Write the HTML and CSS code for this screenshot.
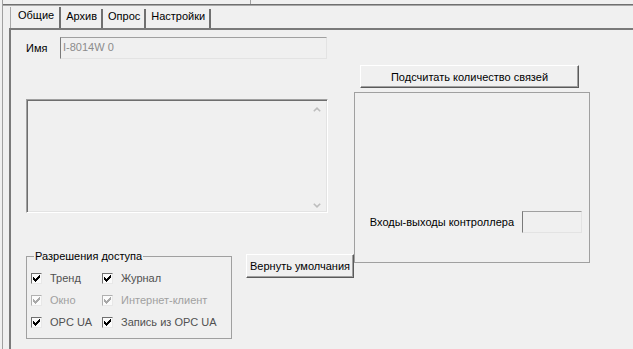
FILE: index.html
```
<!DOCTYPE html>
<html lang="ru">
<head>
<meta charset="utf-8">
<title>Общие</title>
<link rel="stylesheet" href="styles.css">
</head>
<body>
<div class="window">
  <div class="topstrip"><div class="topseg"></div></div>
  <div class="frame">
    <div class="tabs">
      <div class="tab active">Общие</div>
      <div class="tab">Архив</div>
      <div class="tab">Опрос</div>
      <div class="tab">Настройки</div>
    </div>
    <div class="page">
      <div class="col-left">
        <div class="name-row">
          <span class="label">Имя</span>
          <div class="field name-field">I-8014W 0</div>
        </div>
        <div class="listbox">
          <div class="list-body"></div>
          <div class="scroll">
            <div class="arrow"><svg width="8" height="5" viewBox="0 0 8 5"><polyline points="0.8,4.3 4,1.2 7.2,4.3" fill="none" stroke="#bdbdbd" stroke-width="1.6"/></svg></div>
            <div class="arrow arrow-down"><svg width="8" height="5" viewBox="0 0 8 5"><polyline points="0.8,0.7 4,3.8 7.2,0.7" fill="none" stroke="#bdbdbd" stroke-width="1.6"/></svg></div>
          </div>
        </div>
        <div class="bottom-row">
          <fieldset class="group">
            <legend>Разрешения доступа</legend>
            <div class="checks">
              <label class="check"><span class="cb"><svg width="7" height="7" viewBox="0 0 7 7" shape-rendering="crispEdges"><path d="M6 0h1v1h-1zM5 1h2v1h-2zM0 2h1v1h-1zM4 2h3v1h-3zM0 3h2v1h-2zM3 3h3v1h-3zM0 4h5v1h-5zM1 5h3v1h-3zM2 6h1v1h-1z"/></svg></span><span class="ctext">Тренд</span></label>
              <label class="check"><span class="cb"><svg width="7" height="7" viewBox="0 0 7 7" shape-rendering="crispEdges"><path d="M6 0h1v1h-1zM5 1h2v1h-2zM0 2h1v1h-1zM4 2h3v1h-3zM0 3h2v1h-2zM3 3h3v1h-3zM0 4h5v1h-5zM1 5h3v1h-3zM2 6h1v1h-1z"/></svg></span><span class="ctext">Журнал</span></label>
              <label class="check disabled"><span class="cb"><svg width="7" height="7" viewBox="0 0 7 7" shape-rendering="crispEdges"><path d="M6 0h1v1h-1zM5 1h2v1h-2zM0 2h1v1h-1zM4 2h3v1h-3zM0 3h2v1h-2zM3 3h3v1h-3zM0 4h5v1h-5zM1 5h3v1h-3zM2 6h1v1h-1z"/></svg></span><span class="ctext">Окно</span></label>
              <label class="check disabled"><span class="cb"><svg width="7" height="7" viewBox="0 0 7 7" shape-rendering="crispEdges"><path d="M6 0h1v1h-1zM5 1h2v1h-2zM0 2h1v1h-1zM4 2h3v1h-3zM0 3h2v1h-2zM3 3h3v1h-3zM0 4h5v1h-5zM1 5h3v1h-3zM2 6h1v1h-1z"/></svg></span><span class="ctext">Интернет-клиент</span></label>
              <label class="check"><span class="cb"><svg width="7" height="7" viewBox="0 0 7 7" shape-rendering="crispEdges"><path d="M6 0h1v1h-1zM5 1h2v1h-2zM0 2h1v1h-1zM4 2h3v1h-3zM0 3h2v1h-2zM3 3h3v1h-3zM0 4h5v1h-5zM1 5h3v1h-3zM2 6h1v1h-1z"/></svg></span><span class="ctext">OPC UA</span></label>
              <label class="check"><span class="cb"><svg width="7" height="7" viewBox="0 0 7 7" shape-rendering="crispEdges"><path d="M6 0h1v1h-1zM5 1h2v1h-2zM0 2h1v1h-1zM4 2h3v1h-3zM0 3h2v1h-2zM3 3h3v1h-3zM0 4h5v1h-5zM1 5h3v1h-3zM2 6h1v1h-1z"/></svg></span><span class="ctext">Запись из OPC UA</span></label>
            </div>
          </fieldset>
          <button class="btn btn-defaults" type="button">Вернуть умолчания</button>
        </div>
      </div>
      <div class="col-right">
        <button class="btn btn-count" type="button">Подсчитать количество связей</button>
        <div class="io-frame">
          <div class="io-row">
            <span class="io-label">Входы-выходы контроллера</span>
            <div class="field io-field"></div>
          </div>
        </div>
      </div>
    </div>
  </div>
</div>
</body>
</html>
```
FILE: styles.css
```
* { box-sizing: border-box; }
html, body {
  margin: 0;
  padding: 0;
  width: 633px;
  height: 349px;
  overflow: hidden;
  background: #f0f0f0;
  font-family: "Liberation Sans", Arial, sans-serif;
  font-size: 11px;
  color: #000;
}
.window {
  margin-left: 2px;
  border-left: 1px solid #a0a0a0;
  height: 349px;
}
.topstrip { height: 4px; }
.topseg {
  width: 248px;
  height: 4px;
  border-right: 1px solid #a0a0a0;
}
.frame {
  border-top: 1px solid #707070;
  box-shadow: inset 0 1px 0 #a8a8a8;
  height: 345px;
}
.tabs {
  display: flex;
  margin-left: 7px;
  padding-top: 2px;
  height: 23px;
}
.tab {
  height: 19px;
  margin-top: 2px;
  padding: 0 4px 0 5px;
  line-height: 15px;
  border-right: 2px solid #707070;
  white-space: nowrap;
}
.tab.active {
  height: 21px;
  margin-top: 0;
  padding: 1px 5px 0 7px;
  border-left: 1px solid #a8a8a8;
}
.page {
  margin-left: 6px;
  border-top: 2px solid #7a7a7a;
  border-left: 2px solid #7a7a7a;
  height: 330px;
  display: grid;
  grid-template-columns: 328px 236px;
  align-items: start;
  padding-left: 15px;
}
.col-left { display: flex; flex-direction: column; }
.name-row {
  margin-top: 7px;
  display: flex;
  align-items: center;
  height: 22px;
}
.label { width: 34px; }
.field {
  height: 22px;
  border: 1px solid;
  border-color: #a0a0a0 #e3e3e3 #e3e3e3 #7a7a7a;
  background: #f0f0f0;
}
.name-field {
  width: 267px;
  color: #8c8c8c;
  line-height: 19px;
  padding-left: 2px;
}
.listbox {
  margin-top: 40px;
  width: 302px;
  height: 114px;
  display: flex;
  border: 1px solid;
  border-color: #a0a0a0 #ffffff #ffffff #a0a0a0;
  box-shadow: inset 1px 1px 0 #6e6e6e, inset -1px -1px 0 #e3e3e3;
}
.list-body { flex: 1; }
.scroll {
  width: 18px;
  margin-right: 1px;
  display: flex;
  flex-direction: column;
  justify-content: space-between;
}
.arrow {
  height: 17px;
  display: flex;
  align-items: center;
  justify-content: center;
  padding-top: 2px;
}
.arrow-down { padding-top: 4px; }
.arrow svg { display: block; }
.bottom-row {
  margin-top: 37px;
  display: flex;
  align-items: flex-start;
}
.group {
  margin: 0 14px 0 0;
  width: 206px;
  padding: 4px 0 5px 4px;
  border: 1px solid #a0a0a0;
  min-width: 0;
}
.group legend {
  padding: 0 1px;
  margin-left: 3px;
  line-height: 13px;
}
.checks {
  display: grid;
  grid-template-columns: 71px auto;
  grid-auto-rows: 22px;
}
.check {
  display: flex;
  align-items: center;
  color: #505050;
  white-space: nowrap;
}
.check.disabled { color: #a0a0a0; }
.cb {
  width: 11px;
  height: 11px;
  margin-right: 8px;
  border: 1px solid;
  border-color: #707070 #e8e8e8 #e8e8e8 #707070;
  background: #fafafa;
  display: flex;
  align-items: center;
  justify-content: center;
}
.cb svg { display: block; fill: #000; }
.check.disabled .cb { border-color: #b0b0b0 #e8e8e8 #e8e8e8 #b0b0b0; }
.check.disabled .cb svg { fill: #a8a8a8; }
.btn {
  font-family: inherit;
  font-size: 11px;
  color: #000;
  background: #f0f0f0;
  border: 1px solid;
  border-color: #ffffff #5a5a5a #5a5a5a #ffffff;
  box-shadow: inset -1px -1px 0 #a0a0a0;
  padding: 0;
  margin: 0;
  white-space: nowrap;
}
.btn-defaults {
  margin-top: 4px;
  width: 108px;
  height: 24px;
}
.col-right { display: flex; flex-direction: column; }
.btn-count {
  margin-top: 35px;
  margin-left: 6px;
  width: 219px;
  height: 23px;
}
.io-frame {
  margin-top: 4px;
  width: 236px;
  height: 171px;
  border: 1px solid #a0a0a0;
  display: flex;
  flex-direction: column;
  justify-content: flex-end;
  padding-bottom: 29px;
}
.io-row {
  display: flex;
  justify-content: flex-end;
  align-items: center;
  gap: 8px;
  padding-right: 7px;
}
.io-field { width: 60px; }
```
